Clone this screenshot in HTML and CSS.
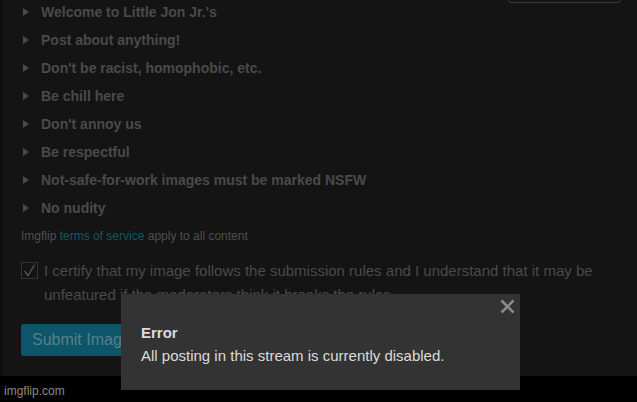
FILE: index.html
```html
<!DOCTYPE html>
<html>
<head>
<meta charset="utf-8">
<link rel="stylesheet" href="styles.css">
</head>
<body>
<div class="page">
  <div class="topbox"></div>
  <ul class="rules">
    <li>Welcome to Little Jon Jr.'s</li>
    <li>Post about anything!</li>
    <li>Don't be racist, homophobic, etc.</li>
    <li>Be chill here</li>
    <li>Don't annoy us</li>
    <li>Be respectful</li>
    <li>Not-safe-for-work images must be marked NSFW</li>
    <li>No nudity</li>
  </ul>
  <div class="tos">Imgflip <a class="link">terms of service</a> apply to all content</div>
  <label class="certify">
    <span class="box"><svg width="15" height="15" viewBox="0 0 15 15"><path d="M2.5 8 L6 12.5 L12.5 2" fill="none" stroke="#555" stroke-width="1.4"/></svg></span>
    <span class="certify-text">I certify that my image follows the submission rules and I understand that it may be unfeatured if the moderators think it breaks the rules.</span>
  </label>
  <div class="actions"><button class="submit">Submit Image</button></div>
</div>
<div class="footer">imgflip.com</div>
<div class="modal">
  <span class="close"><svg width="15" height="15" viewBox="0 0 15 15"><path d="M1.5 1.5 L13.5 13.5 M13.5 1.5 L1.5 13.5" stroke="#8a8a8a" stroke-width="2.6"/></svg></span>
  <div class="modal-title">Error</div>
  <div class="modal-msg">All posting in this stream is currently disabled.</div>
</div>
</body>
</html>
```
FILE: styles.css
```css
html, body {
  margin: 0;
  padding: 0;
  background: #000;
  font-family: "Liberation Sans", Arial, sans-serif;
  width: 637px;
  height: 402px;
  overflow: hidden;
}
.page {
  height: 376px;
  background: #141414;
  border-left: 2px solid #0e0e0e;
  box-sizing: border-box;
  display: flex;
  flex-direction: column;
  overflow: hidden;
  padding: 0 20px 0 19px;
}
.topbox {
  flex: none;
  margin: -40px 0 0 487px;
  width: 113px;
  height: 43px;
  box-sizing: border-box;
  border: 1px solid #383838;
  border-radius: 3px;
}
.rules {
  list-style: none;
  margin: -5px 0 0 0;
  padding: 0;
}
.rules li {
  display: flex;
  align-items: center;
  height: 28px;
  line-height: 28px;
  font-size: 14px;
  font-weight: bold;
  color: #4a4a4a;
}
.rules li::before {
  content: "";
  flex: none;
  width: 0;
  height: 0;
  border-left: 6px solid #4a4a4a;
  border-top: 4px solid transparent;
  border-bottom: 4px solid transparent;
  margin: 0 12px 1px 2px;
}
.tos {
  margin-top: 6px;
  font-size: 12px;
  line-height: 16px;
  color: #4f4f4f;
}
.link {
  color: #175566;
}
.certify {
  display: flex;
  align-items: flex-start;
  margin-top: 15px;
}
.box {
  flex: none;
  width: 17px;
  height: 17px;
  box-sizing: border-box;
  border: 1px solid #333;
  margin: 3px 6px 0 0;
  display: flex;
  align-items: center;
  justify-content: center;
}
.certify-text {
  font-size: 15px;
  line-height: 24px;
  color: #4a4a4a;
}
.actions {
  margin-top: 17px;
}
.submit {
  font-family: inherit;
  font-size: 16px;
  height: 32px;
  line-height: 32px;
  padding: 0 11px;
  border: none;
  border-radius: 3px;
  background: #0d566a;
  color: #587e88;
}
.footer {
  height: 26px;
  background: #000;
  color: #8a8a8a;
  font-size: 12px;
  line-height: 26px;
  padding-left: 4px;
  padding-top: 2px;
  box-sizing: border-box;
}
.modal {
  position: absolute;
  left: 121px;
  top: 294px;
  width: 399px;
  height: 96px;
  background: #333;
  box-sizing: border-box;
  padding: 29px 20px 0 20px;
  color: #dcdcdc;
}
.close {
  position: absolute;
  right: 5px;
  top: 5px;
  width: 15px;
  height: 15px;
  display: flex;
}
.modal-title {
  font-size: 15px;
  font-weight: bold;
  line-height: 20px;
}
.modal-msg {
  font-size: 15px;
  line-height: 20px;
  margin-top: 3px;
}
```
